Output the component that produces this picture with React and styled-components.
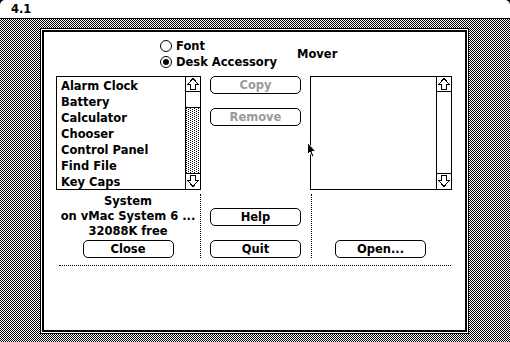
import React from 'react';
import styled, { createGlobalStyle, css } from 'styled-components';

const GlobalStyle = createGlobalStyle`
  html, body {
    margin: 0;
    padding: 0;
    background: #000;
  }
  body {
    font-family: "DejaVu Sans", "Liberation Sans", sans-serif;
  }
`;

const chicago = css`
  font-family: "DejaVu Sans", "Liberation Sans", sans-serif;
  font-weight: bold;
  font-size: 11.5px;
  color: #000;
`;

// builds a 16x16 black-on-white bitmap pattern tile as an svg background
const patternUrl = isBlack => {
  const cells = [];
  for (let y = 0; y < 16; y++) {
    for (let x = 0; x < 16; x++) {
      if (isBlack(x, y)) cells.push(`M${x} ${y}h1v1h-1z`);
    }
  }
  const svg = `<svg xmlns='http://www.w3.org/2000/svg' width='16' height='16' viewBox='0 0 16 16' shape-rendering='crispEdges'><rect width='16' height='16' fill='#fff'/><path d='${cells.join('')}' fill='#000'/></svg>`;
  return `url("data:image/svg+xml,${encodeURIComponent(svg)}")`;
};

const grayUrl = patternUrl((x, y) => (x + y) % 2 === 1);
const ltGrayUrl = patternUrl((x, y) => (y % 2 === 0 ? x % 4 === 0 : x % 4 === 2));

const pattern = url => css`
  background-color: #fff;
  background-image: ${url};
  background-size: 16px 16px;
  background-repeat: repeat;
`;

const Screen = styled.div`
  width: 510px;
  height: 342px;
  display: flex;
  flex-direction: column;
  background: #000;
  overflow: hidden;
  ${chicago};
`;

const MenuBar = styled.div`
  flex: none;
  height: 18px;
  line-height: 18px;
  padding-left: 11px;
  background: #fff;
  border-bottom: 1px solid #000;
  border-radius: 5px 5px 0 0;
`;

const Desktop = styled.div`
  flex: 1;
  padding: 9px 0 0 40px;
  ${pattern(grayUrl)};
`;

const Window = styled.div`
  width: 429px;
  height: 306px;
  box-sizing: border-box;
  border: 1px solid #000;
  padding: 1px;
  background: #fff;
`;

const Pane = styled.div`
  height: 100%;
  box-sizing: border-box;
  border: 2px solid #000;
  display: flex;
  flex-direction: column;
`;

const Header = styled.div`
  display: grid;
  grid-template-columns: 137px auto;
  align-items: center;
  padding: 6px 0 0 116px;
`;

const RadioGroup = styled.div`
  display: flex;
  flex-direction: column;
`;

const RadioRow = styled.div`
  display: flex;
  align-items: center;
  gap: 4px;
  height: 16px;
`;

const RadioDot = styled.span`
  width: 12px;
  height: 12px;
  box-sizing: border-box;
  border: 1px solid #000;
  border-radius: 50%;
  display: grid;
  place-items: center;

  &::after {
    content: '';
    width: 6px;
    height: 6px;
    border-radius: 50%;
    background: ${p => (p.$on ? '#000' : 'transparent')};
  }
`;

const Title = styled.div`
  line-height: 16px;
`;

const Columns = styled.div`
  display: grid;
  grid-template-columns: 145px 91px 142px;
  column-gap: 9px;
  padding-left: 12px;
`;

const Main = styled(Columns)`
  position: relative;
  margin-top: 6px;
  height: 114px;
`;

const ListBox = styled.div`
  display: flex;
  height: 114px;
  box-sizing: border-box;
  border: 1px solid #000;
`;

const Items = styled.ul`
  flex: 1;
  margin: 0;
  padding: 1px 0 0 4px;
  list-style: none;
  overflow: hidden;
`;

const Item = styled.li`
  height: 16px;
  line-height: 16px;
  white-space: nowrap;
`;

const ScrollBar = styled.div`
  width: 15px;
  box-sizing: border-box;
  border-left: 1px solid #000;
  display: flex;
  flex-direction: column;
`;

const ArrowCell = styled.div`
  flex: none;
  height: ${p => (p.$down ? 16 : 15)}px;
  box-sizing: border-box;
  ${p => (p.$down ? 'border-top' : 'border-bottom')}: 1px solid #000;

  svg {
    display: block;
  }
`;

const Thumb = styled.div`
  flex: none;
  height: 16px;
  box-sizing: border-box;
  border-bottom: 1px solid #000;
  background: #fff;
`;

const Track = styled.div`
  flex: 1;
  background: #fff;
  ${p => p.$gray && pattern(ltGrayUrl)};
`;

const ButtonStack = styled.div`
  display: flex;
  flex-direction: column;
  gap: 14px;
`;

const Button = styled.button`
  display: block;
  width: 91px;
  height: 18px;
  box-sizing: border-box;
  margin: 0;
  padding: 0;
  border: 1px solid #000;
  border-radius: 5px;
  background: #fff;
  ${chicago};
  line-height: 16px;
  color: ${p => (p.disabled ? '#9a9a9a' : '#000')};
`;

const Cursor = styled.svg`
  position: absolute;
  left: 263px;
  top: 66px;
`;

const Bottom = styled(Columns)`
  padding-top: 4px;
`;

const InfoCell = styled.div`
  display: flex;
  flex-direction: column;
  align-items: center;
  border-right: 1px dotted #000;
`;

const InfoLine = styled.div`
  line-height: 15px;
  white-space: nowrap;
`;

const CloseButton = styled(Button)`
  margin-top: 1px;
`;

const MidCell = styled.div`
  display: flex;
  flex-direction: column;
  gap: 14px;
  padding-top: 14px;
`;

const OpenCell = styled.div`
  display: flex;
  flex-direction: column;
  justify-content: flex-end;
  align-items: center;
  margin-left: 1px;
  padding-right: 3px;
  border-left: 1px dotted #000;
`;

const Rule = styled.div`
  margin: 7px 14px 0 15px;
  border-top: 1px dotted #000;
`;

const Arrow = ({ down }) => (
  <svg width="14" height="14" viewBox="0 0 14 14" shapeRendering="crispEdges">
    <polygon
      points="7,1.5 12.5,7.5 9.5,7.5 9.5,12.5 4.5,12.5 4.5,7.5 1.5,7.5"
      fill="#fff"
      stroke="#000"
      strokeWidth="1"
      transform={down ? 'translate(0 14) scale(1 -1)' : undefined}
    />
  </svg>
);

const files = [
  'Alarm Clock',
  'Battery',
  'Calculator',
  'Chooser',
  'Control Panel',
  'Find File',
  'Key Caps',
];

export default function App() {
  return (
    <>
      <GlobalStyle />
      <Screen>
        <MenuBar>4.1</MenuBar>
        <Desktop>
          <Window>
            <Pane>
              <Header>
                <RadioGroup>
                  <RadioRow>
                    <RadioDot />
                    <span>Font</span>
                  </RadioRow>
                  <RadioRow>
                    <RadioDot $on />
                    <span>Desk Accessory</span>
                  </RadioRow>
                </RadioGroup>
                <Title>Mover</Title>
              </Header>

              <Main>
                <ListBox>
                  <Items>
                    {files.map(f => (
                      <Item key={f}>{f}</Item>
                    ))}
                  </Items>
                  <ScrollBar>
                    <ArrowCell>
                      <Arrow />
                    </ArrowCell>
                    <Thumb />
                    <Track $gray />
                    <ArrowCell $down>
                      <Arrow down />
                    </ArrowCell>
                  </ScrollBar>
                </ListBox>

                <ButtonStack>
                  <Button disabled>Copy</Button>
                  <Button disabled>Remove</Button>
                </ButtonStack>

                <ListBox>
                  <Items />
                  <ScrollBar>
                    <ArrowCell>
                      <Arrow />
                    </ArrowCell>
                    <Track />
                    <ArrowCell $down>
                      <Arrow down />
                    </ArrowCell>
                  </ScrollBar>
                </ListBox>

                <Cursor width="11" height="17" viewBox="0 0 11 17">
                  <polygon
                    points="0.5,0.5 0.5,12.5 3,10 5,15 7,14.2 5,9.5 8.8,9.5"
                    fill="#000"
                    stroke="#fff"
                    strokeWidth="1"
                  />
                </Cursor>
              </Main>

              <Bottom>
                <InfoCell>
                  <InfoLine>System</InfoLine>
                  <InfoLine>on vMac System 6 ...</InfoLine>
                  <InfoLine>32088K free</InfoLine>
                  <CloseButton>Close</CloseButton>
                </InfoCell>
                <MidCell>
                  <Button>Help</Button>
                  <Button>Quit</Button>
                </MidCell>
                <OpenCell>
                  <Button>Open...</Button>
                </OpenCell>
              </Bottom>

              <Rule />
            </Pane>
          </Window>
        </Desktop>
      </Screen>
    </>
  );
}
